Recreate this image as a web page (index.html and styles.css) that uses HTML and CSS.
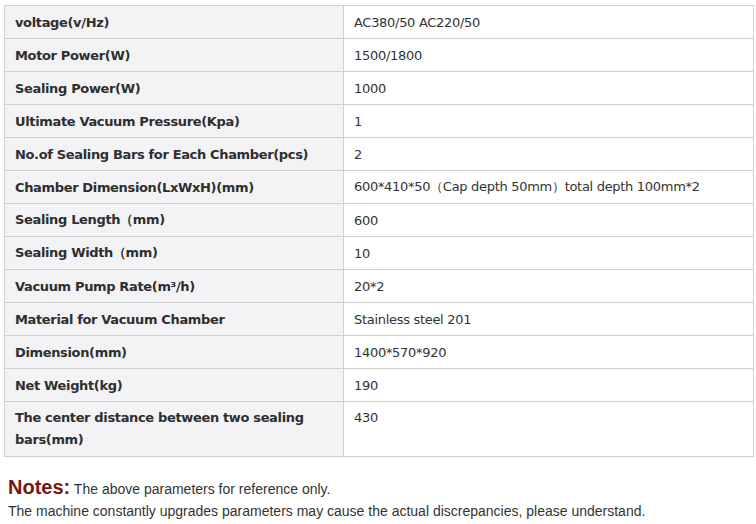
FILE: index.html
```html
<!DOCTYPE html>
<html>
<head>
<meta charset="utf-8">
<link rel="stylesheet" href="styles.css">
</head>
<body>
<table class="spec">
<tr><th>voltage(v/Hz)</th><td>AC380/50 AC220/50</td></tr>
<tr><th>Motor Power(W)</th><td>1500/1800</td></tr>
<tr><th>Sealing Power(W)</th><td>1000</td></tr>
<tr><th>Ultimate Vacuum Pressure(Kpa)</th><td>1</td></tr>
<tr><th>No.of Sealing Bars for Each Chamber(pcs)</th><td>2</td></tr>
<tr><th>Chamber Dimension(LxWxH)(mm)</th><td>600*410*50（Cap depth 50mm）total depth 100mm*2</td></tr>
<tr><th>Sealing Length（mm)</th><td>600</td></tr>
<tr><th>Sealing Width（mm)</th><td>10</td></tr>
<tr><th>Vacuum Pump Rate(m³/h)</th><td>20*2</td></tr>
<tr><th>Material for Vacuum Chamber</th><td>Stainless steel 201</td></tr>
<tr><th>Dimension(mm)</th><td>1400*570*920</td></tr>
<tr><th>Net Weight(kg)</th><td>190</td></tr>
<tr class="tall"><th>The center distance between two sealing bars(mm)</th><td>430</td></tr>
</table>
<div class="notes">
<p class="line1"><span class="label">Notes:</span> The above parameters for reference only.</p>
<p class="line2">The machine constantly upgrades parameters may cause the actual discrepancies, please understand.</p>
</div>
</body>
</html>
```
FILE: styles.css
```css
html, body { margin: 0; padding: 0; background: #fff; }
body { padding: 5px 3px 0 4px; }
.spec {
  border-collapse: collapse;
  width: 750px;
  font-family: "DejaVu Sans", Verdana, sans-serif;
  font-size: 13px;
  color: #333;
}
.spec th, .spec td {
  border: 1px solid #cfcfcf;
  height: 33px;
  padding: 0 10px;
  box-sizing: border-box;
  vertical-align: middle;
  text-align: left;
}
.spec th {
  width: 339px;
  background: #f3f3f5;
  font-weight: bold;
  color: #2e2e2e;
  letter-spacing: -0.35px;
}
.spec td {
  background: #fff;
  letter-spacing: -0.3px;
}
.spec tr.tall th, .spec tr.tall td {
  height: 55px;
  vertical-align: top;
  padding-top: 5px;
  line-height: 22px;
}
.notes {
  font-family: "Liberation Sans", Arial, sans-serif;
  color: #333;
  font-size: 14px;
  padding-left: 4px;
  margin-top: 18px;
}
.notes p { margin: 0; }
.line1 { line-height: 24px; }
.line2 { line-height: 20px; }
.label {
  color: #7a1414;
  font-weight: bold;
  font-size: 20px;
}
```
